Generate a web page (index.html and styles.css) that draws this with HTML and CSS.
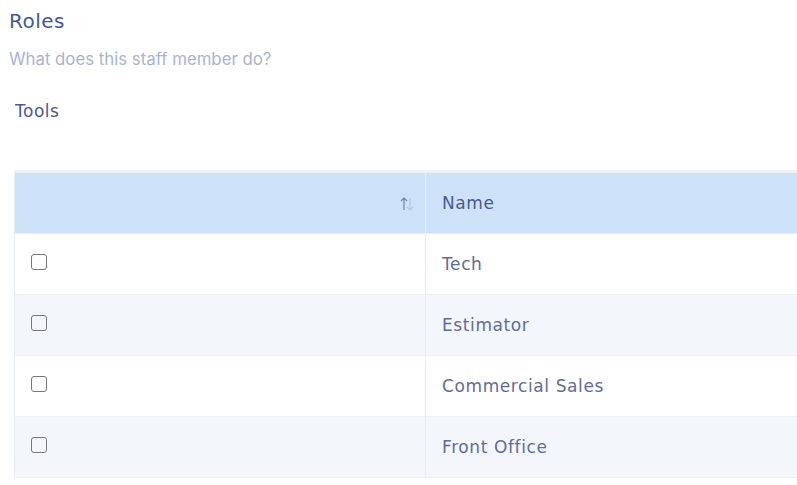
FILE: index.html
```html
<!DOCTYPE html>
<html lang="en">

<head>
    <meta charset="UTF-8">
    <meta name="viewport" content="width=device-width, initial-scale=1.0">
    <title>Roles</title>
    <link rel="stylesheet" href="styles.css">
</head>

<body>

    <h2 class="section-title">Roles</h2>
    <p class="section-help">What does this staff member do?</p>
    <div class="tools-label">Tools</div>

    <table class="roles-table">
        <thead>
            <tr>
                <th class="check-col">
                    <span class="sort-icon">
                        <svg width="16" height="16" viewBox="0 0 16 16">
                            <path d="M5 14V2M2 5l3-3 3 3" fill="none" stroke="#6f84ad" stroke-width="1.2"/>
                            <path d="M11 2v12M8 11l3 3 3-3" fill="none" stroke="#b7c6de" stroke-width="1.2"/>
                        </svg>
                    </span>
                </th>
                <th>Name</th>
            </tr>
        </thead>
        <tbody>
            <tr>
                <td class="check-col"><span class="checkbox"></span></td>
                <td>Tech</td>
            </tr>
            <tr>
                <td class="check-col"><span class="checkbox"></span></td>
                <td>Estimator</td>
            </tr>
            <tr>
                <td class="check-col"><span class="checkbox"></span></td>
                <td>Commercial Sales</td>
            </tr>
            <tr>
                <td class="check-col"><span class="checkbox"></span></td>
                <td>Front Office</td>
            </tr>
        </tbody>
    </table>

</body>
</html>
```

FILE: styles.css
```css
body {
    font-family: "DejaVu Sans", "Open Sans", sans-serif;
    background-color: #fff;
    margin: 0;
    padding: 0 0 0 9px;
    overflow: hidden;
}

.section-title {
    font-size: 20px;
    font-weight: normal;
    letter-spacing: 0.5px;
    color: #4257a0;
    margin: 8px 0 0 0;
    line-height: 26px;
}

.section-help {
    font-family: Inter, Roboto, sans-serif;
    font-size: 16.8px;
    color: #a8b3d4;
    margin: 14px 0 0 0;
    line-height: 22px;
}

.tools-label {
    font-size: 17px;
    letter-spacing: 0.5px;
    color: #4a5a8f;
    margin: 30px 0 0 6px;
    line-height: 22px;
}

.roles-table {
    margin: 48px 0 0 5px;
    width: 800px;
    border-collapse: collapse;
    border-top: 3px solid #edf2f9;
    border-left: 1px solid #e6edf7;
}

.roles-table th,
.roles-table td {
    height: 60px;
    padding: 0 16px;
    text-align: left;
    border-right: 1px solid #e6edf7;
    border-bottom: 1px solid #edf2f9;
    font-size: 17px;
    letter-spacing: 0.6px;
}

.roles-table th {
    background-color: #cde1f8;
    color: #4a5a8f;
    font-weight: normal;
}

.roles-table td {
    color: #5e6c9b;
}

.roles-table tbody tr:nth-child(even) td {
    background-color: #f3f7fc;
}

.check-col {
    width: 378px;
}

th.check-col {
    text-align: right;
    padding-right: 10px;
}

.sort-icon {
    display: inline-block;
    vertical-align: middle;
}

.sort-icon svg {
    display: block;
}

td.check-col {
    vertical-align: top;
    padding-top: 20px;
    height: 40px;
}

.checkbox {
    display: block;
    width: 14px;
    height: 14px;
    border: 1px solid #777;
    border-radius: 3px;
}
```
